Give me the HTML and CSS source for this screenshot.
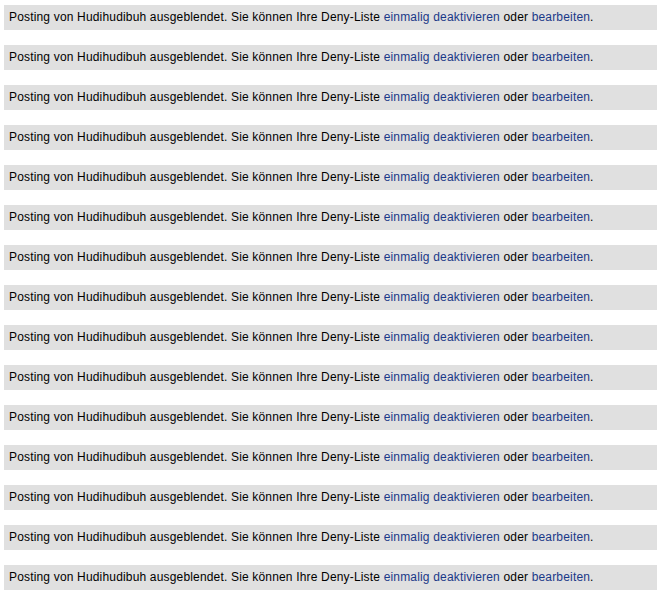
FILE: index.html
```html
<!DOCTYPE html>
<html lang="de">
<head>
<meta charset="utf-8">
<link rel="stylesheet" href="styles.css">
</head>
<body>
<div class="list">
<div class="notice">Posting von Hudihudibuh ausgeblendet. Sie können Ihre Deny-Liste <a href="#">einmalig deaktivieren</a> oder <a href="#">bearbeiten</a>.</div>
<div class="notice">Posting von Hudihudibuh ausgeblendet. Sie können Ihre Deny-Liste <a href="#">einmalig deaktivieren</a> oder <a href="#">bearbeiten</a>.</div>
<div class="notice">Posting von Hudihudibuh ausgeblendet. Sie können Ihre Deny-Liste <a href="#">einmalig deaktivieren</a> oder <a href="#">bearbeiten</a>.</div>
<div class="notice">Posting von Hudihudibuh ausgeblendet. Sie können Ihre Deny-Liste <a href="#">einmalig deaktivieren</a> oder <a href="#">bearbeiten</a>.</div>
<div class="notice">Posting von Hudihudibuh ausgeblendet. Sie können Ihre Deny-Liste <a href="#">einmalig deaktivieren</a> oder <a href="#">bearbeiten</a>.</div>
<div class="notice">Posting von Hudihudibuh ausgeblendet. Sie können Ihre Deny-Liste <a href="#">einmalig deaktivieren</a> oder <a href="#">bearbeiten</a>.</div>
<div class="notice">Posting von Hudihudibuh ausgeblendet. Sie können Ihre Deny-Liste <a href="#">einmalig deaktivieren</a> oder <a href="#">bearbeiten</a>.</div>
<div class="notice">Posting von Hudihudibuh ausgeblendet. Sie können Ihre Deny-Liste <a href="#">einmalig deaktivieren</a> oder <a href="#">bearbeiten</a>.</div>
<div class="notice">Posting von Hudihudibuh ausgeblendet. Sie können Ihre Deny-Liste <a href="#">einmalig deaktivieren</a> oder <a href="#">bearbeiten</a>.</div>
<div class="notice">Posting von Hudihudibuh ausgeblendet. Sie können Ihre Deny-Liste <a href="#">einmalig deaktivieren</a> oder <a href="#">bearbeiten</a>.</div>
<div class="notice">Posting von Hudihudibuh ausgeblendet. Sie können Ihre Deny-Liste <a href="#">einmalig deaktivieren</a> oder <a href="#">bearbeiten</a>.</div>
<div class="notice">Posting von Hudihudibuh ausgeblendet. Sie können Ihre Deny-Liste <a href="#">einmalig deaktivieren</a> oder <a href="#">bearbeiten</a>.</div>
<div class="notice">Posting von Hudihudibuh ausgeblendet. Sie können Ihre Deny-Liste <a href="#">einmalig deaktivieren</a> oder <a href="#">bearbeiten</a>.</div>
<div class="notice">Posting von Hudihudibuh ausgeblendet. Sie können Ihre Deny-Liste <a href="#">einmalig deaktivieren</a> oder <a href="#">bearbeiten</a>.</div>
<div class="notice">Posting von Hudihudibuh ausgeblendet. Sie können Ihre Deny-Liste <a href="#">einmalig deaktivieren</a> oder <a href="#">bearbeiten</a>.</div>
</div>
</body>
</html>
```
FILE: styles.css
```css
html, body {
  margin: 0;
  padding: 0;
  background: #ffffff;
}
body {
  font-family: "Liberation Sans", Arial, sans-serif;
  font-size: 12px;
  color: #000000;
}
.list {
  display: flex;
  flex-direction: column;
  gap: 15px;
  padding: 5px 0 0 4px;
}
.notice {
  background: #e0e0e0;
  height: 25px;
  line-height: 25px;
  padding-left: 5px;
  white-space: nowrap;
  letter-spacing: 0.17px;
}
.notice a {
  color: #1a3888;
  text-decoration: none;
}
```
